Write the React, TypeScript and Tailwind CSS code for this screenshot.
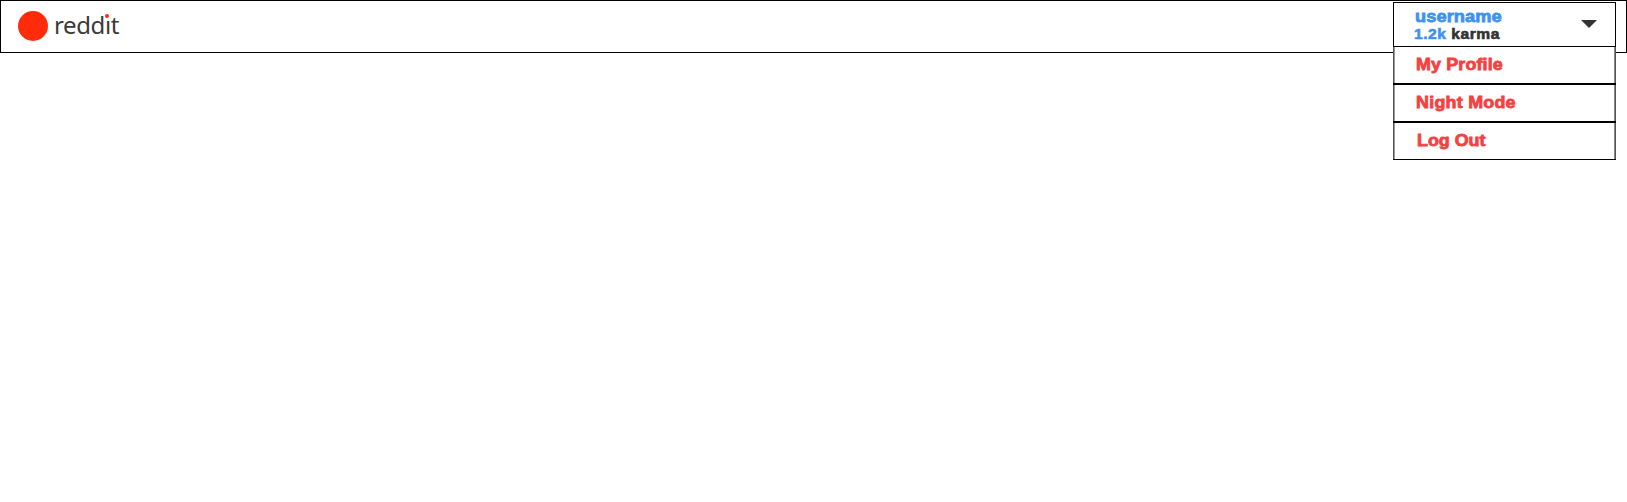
const items = [
  { label: "My Profile", style: "pl-[22px] tracking-[0.15px]" },
  { label: "Night Mode", style: "pl-[22px] tracking-[0.25px]" },
  { label: "Log Out", style: "pl-[23px]" },
];

export default function App() {
  return (
    <div className="h-[502px] bg-white font-['Liberation_Sans',Arial,sans-serif]">
      <header className="relative flex h-[53px] items-center border border-black pb-[1px] pl-[17px]">
        <span className="h-[30px] w-[30px] rounded-full bg-[#ff2b0a]" />
        <span className="mb-[2px] ml-[6px] font-['Noto_Sans',sans-serif] text-[24px] leading-none tracking-[-0.4px] text-[#3a3a3a]">
          redd
          <span className="relative">
            ı<span className="absolute left-[0.5px] top-[6px] h-1 w-1 rounded-full bg-[#ff2b0a]" />
          </span>
          t
        </span>
        <div className="absolute left-[1392px] top-[1px] w-[223px] bg-white font-bold">
          <button className="flex h-[45px] w-full items-start justify-between border border-black bg-white pl-[21px] pr-[18px] text-left">
            <span className="block">
              <span className="mt-[4px] block origin-left scale-x-[1.07] text-[17px] leading-[19px] tracking-[0.1px] text-[#3f92ef] [-webkit-text-stroke:0.8px_#3f92ef]">username</span>
              <span className="-ml-px block origin-left scale-x-[1.11] text-[14px] leading-[16px] tracking-[0.5px] text-[#333] [-webkit-text-stroke:0.6px]">
                <span className="text-[#3f92ef]">1.2k</span> karma
              </span>
            </span>
            <svg className="mt-[17px]" width="16" height="8" viewBox="0 0 16 8">
              <path d="M0 0h16L8 8z" fill="#333" />
            </svg>
          </button>
          <div className="-mt-px">
            {items.map(({ label, style }) => (
              <div key={label} className="h-[38px] border-y border-black">
                <div className={`flex h-full items-center border-l border-r border-[#555] pb-[2px] text-[17px] leading-none text-[#f44040] shadow-[inset_1px_0_0_#999,inset_-1px_0_0_#888] [-webkit-text-stroke:0.8px_#f44040] ${style}`}>
                  <span className="origin-left scale-x-[1.05]">{label}</span>
                </div>
              </div>
            ))}
          </div>
        </div>
      </header>
    </div>
  );
}
